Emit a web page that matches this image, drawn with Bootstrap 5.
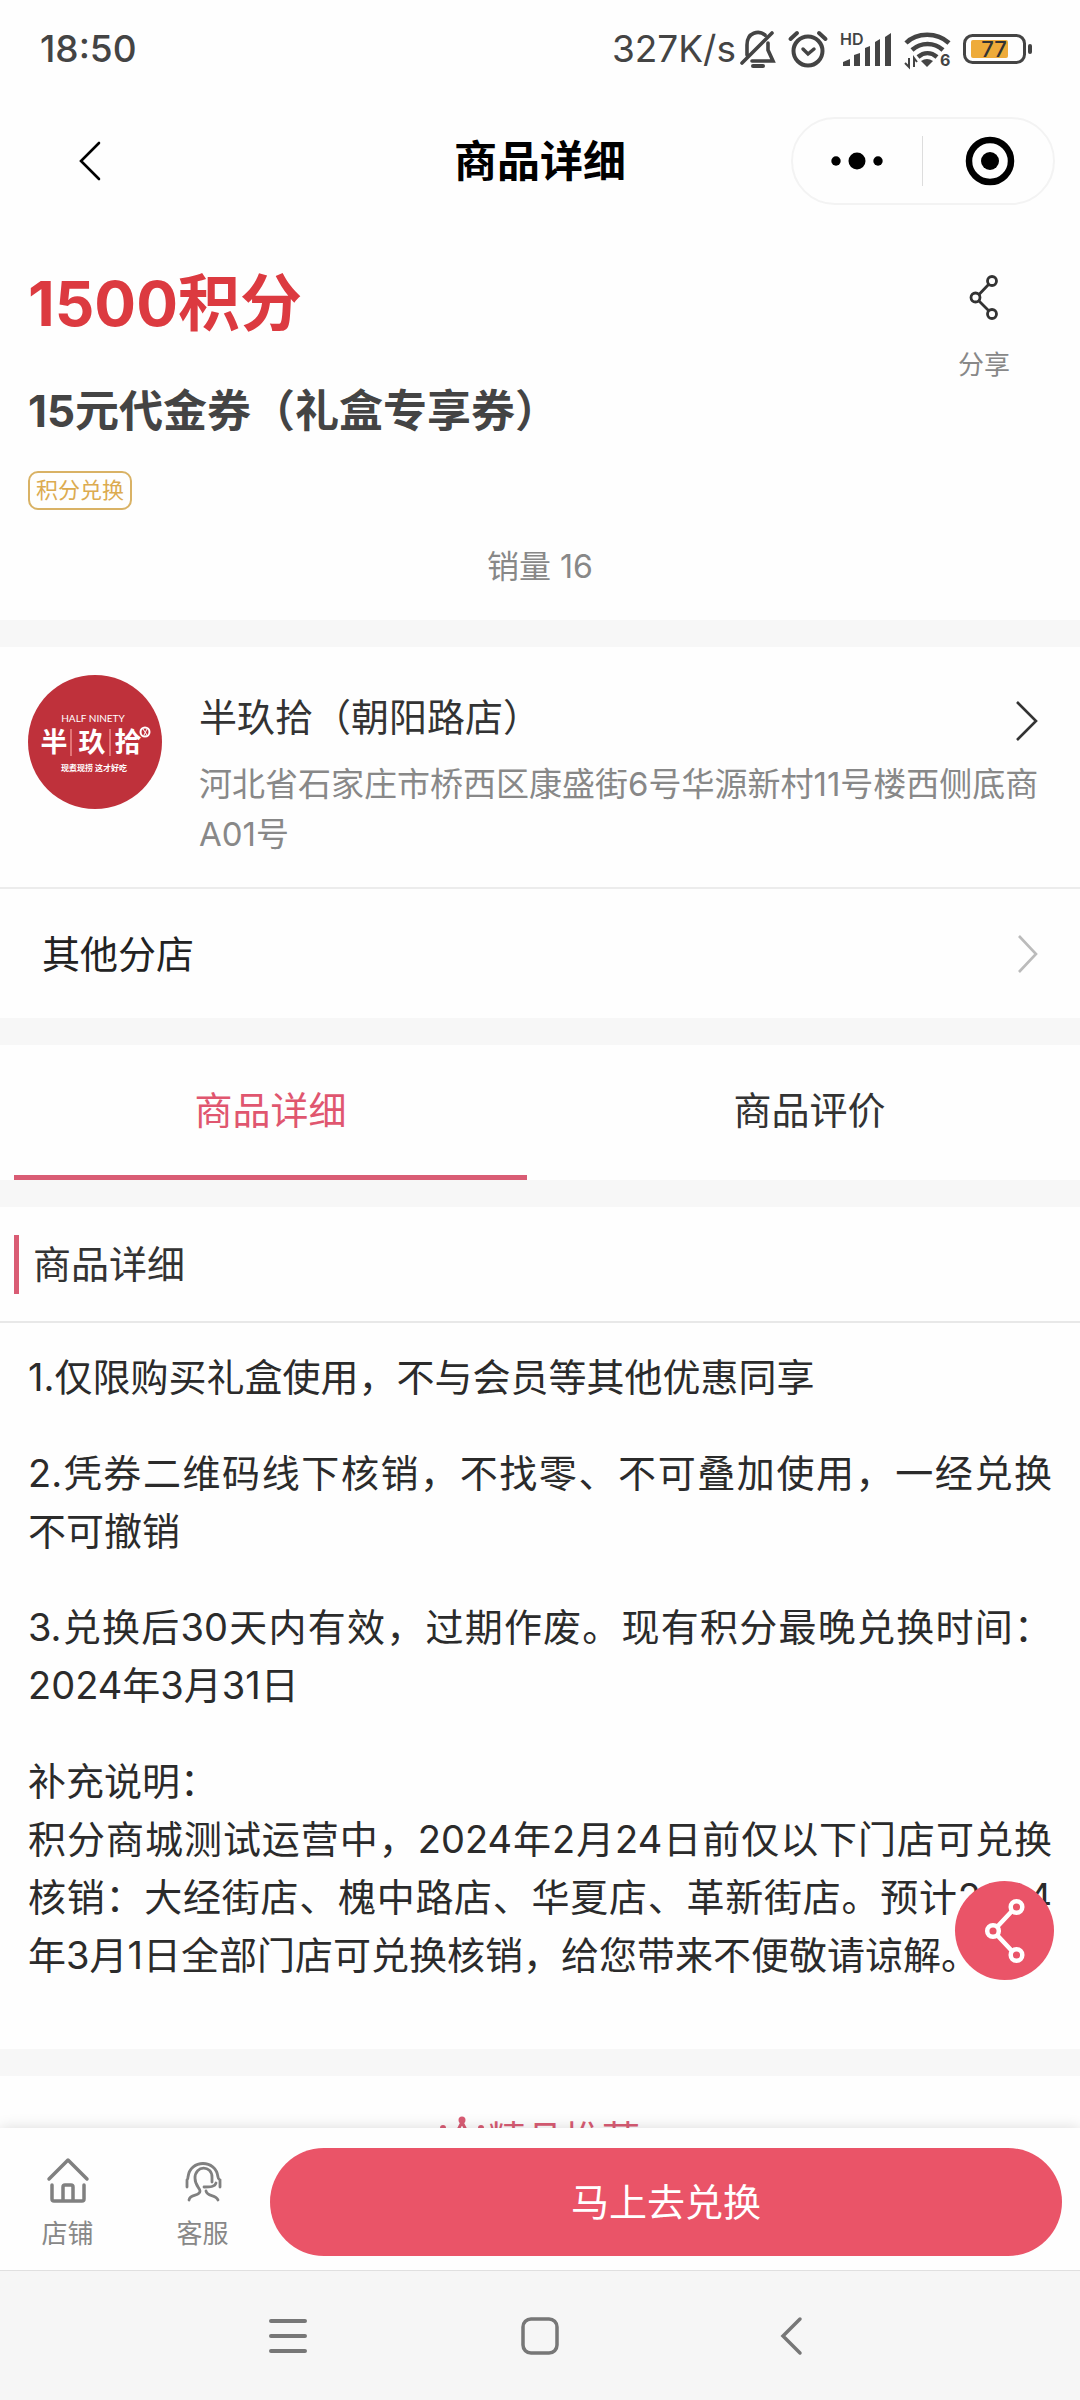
<!DOCTYPE html>
<html lang="zh-CN">
<head>
<meta charset="utf-8">
<meta name="viewport" content="width=device-width, initial-scale=1">
<title>商品详细</title>
<link href="https://cdn.jsdelivr.net/npm/bootstrap@5.3.0/dist/css/bootstrap.min.css" rel="stylesheet">
<style>
  :root { --brand: #ea5468; --brand-soft: #d95c74; --band: #f7f7f7; --ink: #333; --muted: #888; }
  body { font-family: Inter, "Noto Sans CJK SC", sans-serif; font-size: 38px; line-height: 58px; color: var(--ink); background: #fefefe; }
  svg { display: block; flex: none; overflow: visible; }
  button { font-family: inherit; }
  .plain { border: 0; background: none; padding: 0; color: inherit; line-height: inherit; }
  .status { height: 97px; padding: 0 47px 0 40px; color: #444; font-size: 37px; }
  .clock { font-weight: 500; }
  .indicators { gap: 12px; }
  .titlebar { height: 128px; padding: 0 25px; color: #000; }
  .titlebar > div { flex: 1 1 0; }
  .titlebar h1 { font-size: 43px; line-height: 64px; font-weight: 700; }
  .back { margin-left: 54px; }
  .capsule { width: 264px; height: 88px; border: 2px solid #f3f3f3; border-radius: 44px; }
  .capsule .split { width: 1px; height: 50px; background: #ddd; }
  .scroller { overflow: hidden; min-height: 0; }
  .band { border-bottom: 27px solid var(--band); }
  .product { padding: 39px 28px 33px; }
  .points { font-size: 62px; line-height: 80px; font-weight: 700; color: #dc3a40; margin-bottom: 37px; }
  .name { font-size: 44px; line-height: 60px; font-weight: 700; color: #444; margin-bottom: 30px; }
  .tagbox { font-size: 22px; line-height: 35px; padding: 0 6px; border: 2px solid #d9b265; border-radius: 10px; color: #dcab50; }
  .share { width: 136px; font-size: 26px; line-height: 40px; color: var(--muted); padding-top: 11px; gap: 26px; }
  .sales { font-size: 32px; line-height: 40px; margin-top: 37px; color: var(--muted); }
  .store { padding: 28px 28px; border-bottom: 2px solid #ececec; gap: 37px; color: inherit; }
  .store .addr { font-size: 33px; line-height: 50px; color: var(--muted); margin-top: 13px; }
  .store .heading { padding: 13px 14px 0 0; }
  .branches { height: 129px; padding: 0 42px; color: #222; }
  .tabs { padding: 0 14px; gap: 26px; }
  .tabs button { flex: 1 1 0; height: 135px; border-bottom: 5px solid transparent; }
  .tabs button.active { color: #e0566f; border-color: var(--brand-soft); }
  .sect { height: 116px; padding-left: 14px; gap: 14px; border-bottom: 2px solid #e8e8e8; }
  .sect::before { content: ""; width: 5px; height: 59px; background: var(--brand-soft); }
  .detail { padding: 25px 28px 65px; text-align: justify; color: #2b2b2b; }
  .detail p { margin-bottom: 38px; }
  .detail p:last-child { margin-bottom: 0; }
  .picks { padding-top: 34px; gap: 4px; color: var(--brand-soft); }
  .picks svg { margin-top: 6px; }
  .fab { right: 26px; bottom: 148px; width: 99px; height: 99px; background: var(--brand); z-index: 2; }
  .buybar { height: 142px; padding: 5px 18px 0 0; background: #fefefe; box-shadow: 0 0 14px rgba(0,0,0,.14); z-index: 1; }
  .buybar a { width: 135px; font-size: 26px; line-height: 32px; color: var(--muted); gap: 13px; padding-top: 4px; }
  .buybar .buy { height: 108px; background: var(--brand); color: #fff; }
  .sysnav { height: 130px; background: #f6f6f6; border-top: 1px solid #e0e0e0; padding: 0 162px; z-index: 1; }
</style>
</head>
<body>
<div class="vh-100 d-flex flex-column overflow-hidden">
  <div class="status d-flex align-items-center justify-content-between flex-shrink-0">
    <span class="clock">18:50</span>
    <div class="indicators d-flex align-items-center">
      <div class="d-flex align-items-center gap-1">
        <span>327K/s</span>
        <svg width="36" height="38" viewBox="0 0 36 38" fill="none" stroke="#444" stroke-width="3.600" stroke-linecap="round"><path d="M2 33 32 3M7 25V15C7 2 19 0 25 5M28 13V20L33 31H12"/><path d="M13 36h10" stroke-width="4"/></svg>
      </div>
      <svg width="40" height="38" viewBox="0 0 40 38" fill="none" stroke="#444" stroke-width="4" stroke-linecap="round"><circle cx="20" cy="21" r="14.500"/><path d="M2.500 9 9 3M31 3l6.500 6"/><path d="m15 19 5 5 6-5" stroke-width="3.500"/></svg>
      <svg width="52" height="38" viewBox="0 0 52 38" fill="#444"><text x="0" y="15" font-size="16" font-weight="600" font-family="Inter, sans-serif">HD</text><path d="M3 36v-4l7-3v7zM14 36V25l6-2v13zM25 36V18l5-2v20zM35 36V12l5-3v27zM45 36V7l6-4v33z"/></svg>
      <svg width="47" height="38" viewBox="0 0 47 38" fill="none" stroke="#444" stroke-width="4.500"><path d="M2 13C13 2 33 2 45 13M8 20c9-8 22-8 31 0M14 27c6-5 13-5 19 0"/><path d="M17 31q6-4 12 0l-6 6z" fill="#444" stroke="none"/><path d="M5 28v9l-4-4M10 37v-9l3 4" stroke-width="2"/><text x="36" y="36" font-size="16" font-weight="700" fill="#444" stroke="none" font-family="Inter, sans-serif">6</text></svg>
      <svg width="70" height="32" viewBox="0 0 70 32"><rect x="1.500" y="2.500" width="60" height="27" rx="8" fill="none" stroke="#444" stroke-width="3"/><rect x="8" y="7" width="37" height="18" rx="2" fill="#eeab3a"/><rect x="65" y="11" width="4" height="10" rx="2" fill="#444"/><text x="31" y="24" font-size="22" text-anchor="middle" fill="#333" font-weight="500" font-family="Inter, sans-serif">77</text></svg>
    </div>
  </div>

  <header class="titlebar d-flex align-items-center flex-shrink-0">
    <div class="d-flex"><button class="plain back" aria-label="返回"><svg width="22" height="40" viewBox="0 0 22 40" fill="none" stroke="#000" stroke-width="2.600" stroke-linecap="round"><path d="M20 2 2 20l18 18"/></svg></button></div>
    <h1 class="m-0">商品详细</h1>
    <div class="d-flex justify-content-end">
      <div class="capsule d-flex align-items-center">
        <button class="plain flex-fill d-flex justify-content-center" aria-label="更多"><svg width="52" height="18" viewBox="0 0 52 18"><circle cx="5" cy="9" r="4.700"/><circle cx="26" cy="9" r="8.500"/><circle cx="47" cy="9" r="4.700"/></svg></button>
        <span class="split"></span>
        <button class="plain flex-fill d-flex justify-content-center ps-1" aria-label="关闭"><svg width="50" height="50" viewBox="0 0 50 50"><circle cx="25" cy="25" r="21" fill="none" stroke="#000" stroke-width="6.500"/><circle cx="25" cy="25" r="9"/></svg></button>
      </div>
    </div>
  </header>

  <div class="position-relative flex-grow-1 d-flex flex-column scroller">
    <main class="flex-grow-1 scroller">
      <section class="product band">
        <div class="d-flex justify-content-between align-items-start">
          <div>
            <div class="points">1500积分</div>
            <h2 class="name">15元代金券（礼盒专享券）</h2>
          </div>
          <button class="plain share d-flex flex-column align-items-center">
            <svg width="30" height="44" viewBox="0 0 30 44" fill="none" stroke="#333" stroke-width="2.800"><circle cx="23" cy="6" r="4.500"/><circle cx="6.500" cy="22.500" r="4.500"/><circle cx="23" cy="39" r="4.500"/><path d="M20 9 10 19.500M10 26l10 10"/></svg>
            分享
          </button>
        </div>
        <div class="d-flex"><span class="tagbox">积分兑换</span></div>
        <div class="sales text-center">销量 16</div>
      </section>

      <section class="band">
        <a href="#" class="store d-flex text-decoration-none">
          <svg width="134" height="134" viewBox="0 0 134 134" fill="#fff" text-anchor="middle"><circle cx="67" cy="67" r="67" fill="#bf313b"/>
            <text x="65" y="47" font-size="10" font-family="Lato, sans-serif">HALF NINETY</text>
            <g font-size="27" font-weight="700" font-family="'Noto Sans CJK SC', sans-serif"><text x="26" y="77">半</text><text x="64" y="77">玖</text><text x="100" y="77">拾</text></g>
            <path d="M43 54v27M82 54v27" stroke="#f08a8a" stroke-width="1.500"/>
            <circle cx="117" cy="57" r="4.500" fill="#bf313b" stroke="#fff" stroke-width="2"/><path d="m115 54 4 6m0-6-3 6" stroke="#fff"/>
            <text x="66" y="96" font-size="8" font-weight="700" font-family="'Noto Sans CJK SC', sans-serif">现煮现捞 这才好吃</text></svg>
          <div class="flex-grow-1">
            <div class="heading d-flex justify-content-between align-items-center">
              <span>半玖拾（朝阳路店）</span>
              <svg class="mt-2" width="22" height="40" viewBox="0 0 22 40" fill="none" stroke="#333" stroke-width="2.600"><path d="m1 1 19 19L1 39"/></svg>
            </div>
            <div class="addr">河北省石家庄市桥西区康盛街6号华源新村11号楼西侧底商A01号</div>
          </div>
        </a>
        <a href="#" class="branches d-flex justify-content-between align-items-center text-decoration-none">
          <span>其他分店</span>
          <svg width="20" height="38" viewBox="0 0 20 38" fill="none" stroke="#bbb" stroke-width="2.600"><path d="m1 1 17 18L1 37"/></svg>
        </a>
      </section>

      <nav class="tabs band d-flex">
        <button class="plain active">商品详细</button>
        <button class="plain">商品评价</button>
      </nav>

      <section class="band">
        <div class="sect d-flex align-items-center">商品详细</div>
        <div class="detail">
          <p>1.仅限购买礼盒使用，不与会员等其他优惠同享</p>
          <p>2.凭券二维码线下核销，不找零、不可叠加使用，一经兑换<span class="text-nowrap">不可撤销</span></p>
          <p>3.兑换后30天内有效，过期作废。现有积分最晚兑换时间：2024年3月31日</p>
          <p>补充说明：<br>积分商城测试运营中，2024年2月24日前仅以下门店可兑换核销：大经街店、槐中路店、华夏店、革新街店。预计2024年3月1日全部门店可兑换核销，给您带来不便敬请谅解。</p>
        </div>
      </section>

      <section class="picks d-flex justify-content-center">
        <svg width="44" height="40" viewBox="0 0 44 40" fill="none" stroke="currentColor" stroke-width="3"><circle cx="22" cy="4" r="2" fill="currentColor"/><circle cx="3" cy="12" r="1.500"/><circle cx="41" cy="12" r="1.500"/><path d="m4 14 5 20h26l5-20-10 8-8-16-8 16z"/></svg>
        <span>精品推荐</span>
      </section>
    </main>
    <button class="plain fab position-absolute rounded-circle d-flex align-items-center justify-content-center" aria-label="分享">
      <svg width="42" height="64" viewBox="0 0 42 64" fill="none" stroke="#fff" stroke-width="4.500"><circle cx="32.500" cy="8" r="5.800"/><circle cx="9" cy="32" r="5.800"/><circle cx="32.500" cy="56" r="5.800"/><path d="M28 12 13 28M13 36l15 16"/></svg>
    </button>
  </div>

  <div class="buybar d-flex align-items-center flex-shrink-0">
    <a href="#" class="d-flex flex-column align-items-center text-decoration-none">
      <svg width="44" height="48" viewBox="0 0 44 48" fill="none" stroke="#808080" stroke-width="3.500" stroke-linecap="round" stroke-linejoin="round"><path d="M3 22 22 3l19 19M6 28v14q0 2 2 2h28q2 0 2-2V28"/><path d="M17 43V30q0-2 2-2h6q2 0 2 2v13"/></svg>
      店铺
    </a>
    <a href="#" class="d-flex flex-column align-items-center text-decoration-none">
      <svg width="44" height="48" viewBox="0 0 44 48" fill="none" stroke="#808080" stroke-width="2.800" stroke-linecap="round"><path d="M6 30v-7q1-1 1-3C9 2 35 2 37 20q0 2 2 3v7"/><path d="M8 43c1-7 11-3 11-9 0-3-5-5-5-13 0-13 17-13 17-1v5M23 30c6 0 11 0 12-4M25 34c1 6 10 3 12 9"/></svg>
      客服
    </a>
    <button class="plain buy flex-grow-1 rounded-pill">马上去兑换</button>
  </div>
  <div class="sysnav d-flex align-items-center justify-content-around flex-shrink-0">
    <button class="plain" aria-label="任务"><svg width="38" height="38" viewBox="0 0 38 38" stroke="#777" stroke-width="4" stroke-linecap="round"><path d="M2 4h34M2 19h34M2 34h34"/></svg></button>
    <button class="plain" aria-label="主页"><svg width="38" height="38" viewBox="0 0 38 38" fill="none" stroke="#777" stroke-width="3.500"><rect x="2" y="2" width="34" height="34" rx="8"/></svg></button>
    <button class="plain" aria-label="返回"><svg width="38" height="38" viewBox="0 0 38 38" fill="none" stroke="#777" stroke-width="3.500" stroke-linecap="round"><path d="M27 2 10 19l17 17"/></svg></button>
  </div>
</div>
<script src="https://cdn.jsdelivr.net/npm/bootstrap@5.3.0/dist/js/bootstrap.bundle.min.js"></script>
</body>
</html>
